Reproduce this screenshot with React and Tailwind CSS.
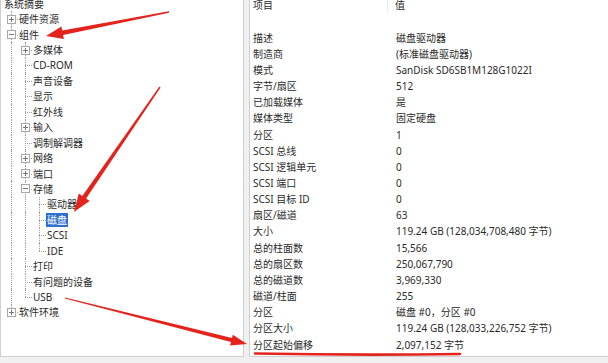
import React from "react";

const tree = [
  { lv: 0, t: "系统摘要" },
  { lv: 1, t: "硬件资源", ex: "+" },
  { lv: 1, t: "组件", ex: "-" },
  { lv: 2, t: "多媒体", ex: "+" },
  { lv: 2, t: "CD-ROM" },
  { lv: 2, t: "声音设备" },
  { lv: 2, t: "显示" },
  { lv: 2, t: "红外线" },
  { lv: 2, t: "输入", ex: "+" },
  { lv: 2, t: "调制解调器" },
  { lv: 2, t: "网络", ex: "+" },
  { lv: 2, t: "端口", ex: "+" },
  { lv: 2, t: "存储", ex: "-" },
  { lv: 3, t: "驱动器" },
  { lv: 3, t: "磁盘", sel: true },
  { lv: 3, t: "SCSI" },
  { lv: 3, t: "IDE", last: true },
  { lv: 2, t: "打印" },
  { lv: 2, t: "有问题的设备" },
  { lv: 2, t: "USB", last: true },
  { lv: 1, t: "软件环境", ex: "+", last: true },
];

const rows = [
  ["描述", "磁盘驱动器"],
  ["制造商", "(标准磁盘驱动器)"],
  ["模式", "SanDisk SD6SB1M128G1022I"],
  ["字节/扇区", "512"],
  ["已加载媒体", "是"],
  ["媒体类型", "固定硬盘"],
  ["分区", "1"],
  ["SCSI 总线", "0"],
  ["SCSI 逻辑单元", "0"],
  ["SCSI 端口", "0"],
  ["SCSI 目标 ID", "0"],
  ["扇区/磁道", "63"],
  ["大小", "119.24 GB (128,034,708,480 字节)"],
  ["总的柱面数", "15,566"],
  ["总的扇区数", "250,067,790"],
  ["总的磁道数", "3,969,330"],
  ["磁道/柱面", "255"],
  ["分区", "磁盘 #0，分区 #0"],
  ["分区大小", "119.24 GB (128,033,226,752 字节)"],
  ["分区起始偏移", "2,097,152 字节"],
];

// which ancestor levels still have siblings below, per row
function continuing(i) {
  const out = {};
  const lv = tree[i].lv;
  for (let k = 1; k < lv; k++) {
    let a = i;
    while (a >= 0 && tree[a].lv !== k) a--;
    out[k] = a >= 0 && !tree[a].last;
  }
  return out;
}

function Arrow({ from, to, head = 16, hw = 12, w0 = 1, w1 = 4 }) {
  const dx = to[0] - from[0];
  const dy = to[1] - from[1];
  const len = Math.hypot(dx, dy);
  const ux = dx / len, uy = dy / len;
  const nx = -uy, ny = ux;
  const bx = to[0] - ux * head, by = to[1] - uy * head;
  const p = (x, y) => `${x.toFixed(1)},${y.toFixed(1)}`;
  const pts = [
    p(from[0] + nx * w0 / 2, from[1] + ny * w0 / 2),
    p(bx + nx * w1 / 2, by + ny * w1 / 2),
    p(bx + nx * hw / 2, by + ny * hw / 2),
    p(to[0], to[1]),
    p(bx - nx * hw / 2, by - ny * hw / 2),
    p(bx - nx * w1 / 2, by - ny * w1 / 2),
    p(from[0] - nx * w0 / 2, from[1] - ny * w0 / 2),
  ].join(" ");
  return <polygon points={pts} fill="#e5231d" />;
}

function Expander({ sign }) {
  return (
    <span className="relative z-10 w-[9px] h-[9px] border border-[#a8a8a8] bg-white flex items-center justify-center">
      <span className="absolute w-[5px] h-px bg-[#777]" />
      {sign === "+" && <span className="absolute w-px h-[5px] bg-[#777]" />}
    </span>
  );
}

function TreeRow({ item, i }) {
  const cont = continuing(i);
  const cells = [];
  for (let k = 1; k <= item.lv; k++) {
    const own = k === item.lv;
    cells.push(
      <div key={k} className="relative w-[14px] h-full shrink-0 flex items-center justify-center">
        {!own && cont[k] && <div className="absolute left-[7px] top-0 bottom-0 border-l border-dotted border-[#a0a0a0]" />}
        {own && (
          <>
            <div className={`absolute left-[7px] top-0 border-l border-dotted border-[#a0a0a0] ${item.last ? "h-1/2" : "bottom-0"}`} />
            <div className="absolute left-[7px] right-0 top-1/2 border-t border-dotted border-[#a0a0a0]" />
            {item.ex && <Expander sign={item.ex} />}
          </>
        )}
      </div>
    );
  }
  return (
    <div className="h-[15.45px] flex items-center">
      <div className="flex h-full pl-[3px]">{cells}</div>
      <span
        className={`leading-[14px] px-[1px] whitespace-nowrap ${item.lv === 0 ? "ml-[-1px]" : ""} ${
          item.sel ? "bg-[#2f6fcd] text-white" : "text-[#2a2a2a]"
        }`}
      >
        {item.t}
      </span>
    </div>
  );
}

export default function App() {
  return (
    <div
      className="relative w-[608px] h-[363px] overflow-hidden bg-[#f0f0f0] flex flex-col text-[10px]"
      style={{ fontFamily: '"Noto Sans", "Noto Sans CJK SC", sans-serif' }}
    >
      <div className="flex h-[357px]">
        <div className="w-[244px] shrink-0 bg-white border-l border-r border-b border-[#cfcfcf] overflow-hidden">
          <div className="-mt-[4px]">
            {tree.map((item, i) => (
              <TreeRow key={i} item={item} i={i} />
            ))}
          </div>
        </div>
        <div className="w-[5px] shrink-0" />
        <div className="flex-1 bg-white border-l border-b border-[#cfcfcf] overflow-hidden">
          <div className="-mt-[3px] h-[16px] flex items-center text-[#2a2a2a]">
            <div className="w-[138px] pl-[3px] h-full flex items-center border-r border-[#ececec]">项目</div>
            <div className="pl-[7px]">值</div>
          </div>
          <div className="h-[17px]" />
          {rows.map(([k, v], i) => (
            <div key={i} className="h-[16.16px] flex items-center text-[#2a2a2a] whitespace-nowrap">
              <div className="w-[138px] pl-[3px]">{k}</div>
              <div className="pl-[8px]">{v}</div>
            </div>
          ))}
        </div>
      </div>

      <svg className="absolute inset-0 pointer-events-none" width="608" height="363">
        <Arrow from={[169, 12]} to={[46, 36]} head={17} hw={13} w0={1.5} w1={4.5} />
        <Arrow from={[160, 87]} to={[74, 212]} head={18} hw={13} w0={1.5} w1={4.5} />
        <Arrow from={[65, 298]} to={[247, 344]} head={16} hw={11} w0={1} w1={4} />
        <path d="M255 353.5 Q 360 355.5 460 354" stroke="#e5231d" strokeWidth="2.6" fill="none" strokeLinecap="round" />
      </svg>
    </div>
  );
}
